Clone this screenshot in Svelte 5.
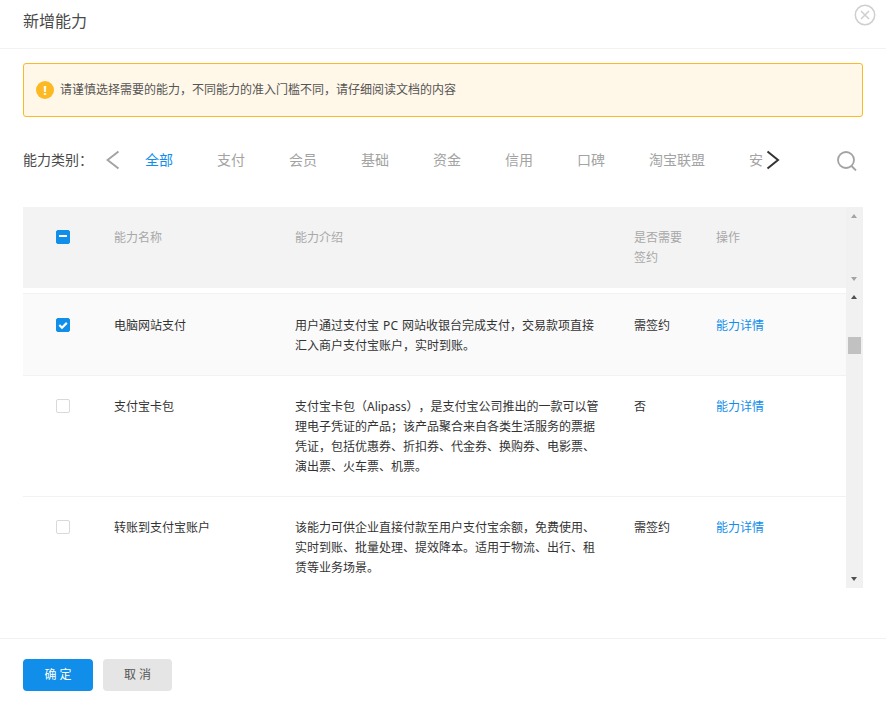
<script lang="ts">
  const tabs = ["全部", "支付", "会员", "基础", "资金", "信用", "口碑", "淘宝联盟", "安全", "其他"];

  let active = $state("全部");

  let rows = $state([
    {
      name: "电脑网站支付",
      intro: "用户通过支付宝 PC 网站收银台完成支付，交易款项直接汇入商户支付宝账户，实时到账。",
      sign: "需签约",
      checked: true,
    },
    {
      name: "支付宝卡包",
      intro: "支付宝卡包（Alipass），是支付宝公司推出的一款可以管理电子凭证的产品；该产品聚合来自各类生活服务的票据凭证，包括优惠券、折扣券、代金券、换购券、电影票、演出票、火车票、机票。",
      sign: "否",
      checked: false,
    },
    {
      name: "转账到支付宝账户",
      intro: "该能力可供企业直接付款至用户支付宝余额，免费使用、实时到账、批量处理、提效降本。适用于物流、出行、租赁等业务场景。",
      sign: "需签约",
      checked: false,
    },
  ]);
</script>

<div class="dialog">
  <header class="head">
    <h2>新增能力</h2>
    <button class="close" aria-label="关闭">
      <svg width="22" height="22" viewBox="0 0 22 22" fill="none" stroke="#cfcfcf" stroke-width="1.5">
        <circle cx="11" cy="11" r="9.7" />
        <path d="M7 7l8 8M15 7l-8 8" />
      </svg>
    </button>
  </header>

  <div class="alert">
    <span class="alert-icon">!</span>
    <span>请谨慎选择需要的能力，不同能力的准入门槛不同，请仔细阅读文档的内容</span>
  </div>

  <div class="filter">
    <span class="filter-label">能力类别：</span>
    <svg class="prev" width="14" height="20" viewBox="0 0 14 20" fill="none" stroke="#a3a3a3" stroke-width="2">
      <path d="M12.500 1.500L1.500 10l11 8.500" />
    </svg>
    <div class="tabs">
      {#each tabs as t}
        <button class="tab" class:on={t === active} onclick={() => (active = t)}>{t}</button>
      {/each}
    </div>
    <svg class="next" width="14" height="20" viewBox="0 0 14 20" fill="none" stroke="#333" stroke-width="2">
      <path d="M1.500 1.500L12 10 1.500 18.500" />
    </svg>
    <svg class="search" width="22" height="22" viewBox="0 0 22 22" fill="none" stroke="#a3a3a3" stroke-width="1.800">
      <circle cx="9" cy="11" r="8" />
      <path d="M14.500 17l4.500 4.500" />
    </svg>
  </div>

  <div class="table">
    <div class="thead-wrap">
      <div class="row thead">
        <div><span class="check on"><i class="dash"></i></span></div>
        <div>能力名称</div>
        <div>能力介绍</div>
        <div class="sign-head">是否需要签约</div>
        <div>操作</div>
      </div>
      <div class="bar">
        <i class="up light"></i>
        <i class="down light"></i>
      </div>
    </div>
    <div class="tbody-wrap">
      <div class="tbody">
        {#each rows as r, i}
          <div class="row item" class:picked={r.checked} class:first={i === 0}>
            <div>
              <button class="check" class:on={r.checked} aria-label="选择" onclick={() => (r.checked = !r.checked)}>
                {#if r.checked}
                  <svg width="14" height="14" viewBox="0 0 14 14" fill="none" stroke="#fff" stroke-width="2.200">
                    <path d="M3.300 7l2.700 2.700 4.800-4.800" />
                  </svg>
                {/if}
              </button>
            </div>
            <div>{r.name}</div>
            <div class="intro">{r.intro}</div>
            <div>{r.sign}</div>
            <div><a href="#detail" class="link">能力详情</a></div>
          </div>
        {/each}
      </div>
      <div class="bar">
        <i class="up"></i>
        <span class="thumb"></span>
        <i class="down"></i>
      </div>
    </div>
  </div>

  <footer class="foot">
    <button class="btn primary">确 定</button>
    <button class="btn">取 消</button>
  </footer>
</div>

<style>
  :global(body) {
    margin: 0;
    background: #fff;
    overflow: hidden;
  }
  .dialog {
    height: 704px;
    width: 886px;
    position: relative;
    font-family: "Noto Sans", "Noto Sans CJK SC", sans-serif;
    font-size: 12px;
    line-height: 20px;
    color: #333;
    overflow: hidden;
    text-spacing-trim: space-all;
  }
  button {
    font: inherit;
    border: 0;
    padding: 0;
    background: none;
    cursor: pointer;
  }
  .head {
    height: 48px;
    border-bottom: 1px solid #f2f2f2;
    padding-left: 23px;
    display: flex;
    align-items: center;
  }
  .head h2 {
    margin: 0;
    font-size: 16px;
    font-weight: 400;
    color: #4a4a4a;
    line-height: 42px;
    align-self: flex-start;
  }
  .close {
    position: absolute;
    left: 854px;
    top: 4px;
    width: 22px;
    height: 22px;
  }
  .alert {
    margin: 14px 23px 0;
    width: 840px;
    height: 54px;
    box-sizing: border-box;
    border: 1px solid #fcb826;
    border-radius: 3px;
    background: #fff7e8;
    display: flex;
    align-items: center;
    padding-left: 12px;
    gap: 6px;
    color: #555;
  }
  .alert-icon {
    width: 18px;
    height: 18px;
    border-radius: 50%;
    background: #fdb924;
    color: #fff;
    font-size: 13px;
    font-weight: 700;
    line-height: 18px;
    text-align: center;
  }
  .filter {
    margin: 33px 23px 0;
    height: 20px;
    display: flex;
    align-items: center;
  }
  .filter-label {
    font-size: 14px;
    flex: none;
    width: 83px;
    color: #4a4a4a;
    white-space: nowrap;
  }
  .prev {
    flex: none;
  }
  .tabs {
    flex: none;
    width: 631px;
    margin-left: 12px;
    display: flex;
    gap: 44px;
    padding-left: 13px;
    box-sizing: border-box;
    overflow: hidden;
    white-space: nowrap;
  }
  .tab {
    flex: none;
    font-size: 14px;
    color: #a3a3a3;
  }
  .tab.on {
    color: #108ee9;
  }
  .next {
    flex: none;
    margin-left: 3px;
  }
  .search {
    flex: none;
    margin-left: 57px;
  }
  .table {
    margin: 37px 0 0 23px;
    width: 840px;
  }
  .thead-wrap {
    display: flex;
    height: 81px;
  }
  .tbody-wrap {
    display: flex;
    height: 300px;
  }
  .row {
    width: 823px;
    display: grid;
    grid-template-columns: 91px 181px 339px 82px 130px;
    box-sizing: border-box;
  }
  .thead {
    background: #f3f3f3;
    color: #a8a8a8;
    padding-top: 21px;
  }
  .thead .check {
    margin-top: 2px;
  }
  .sign-head {
    width: 52px;
  }
  .tbody {
    width: 823px;
    padding-top: 5px;
    overflow: hidden;
    box-sizing: border-box;
  }
  .item {
    border-top: 1px solid #f2f2f2;
    padding: 21px 0 19px;
  }
  .item.first {
    padding-top: 22px;
  }
  .item.picked {
    background: #fafafa;
  }
  .intro {
    width: 306px;
    word-spacing: 1px;
  }
  .link {
    color: #108ee9;
    text-decoration: none;
  }
  .check {
    display: block;
    width: 14px;
    height: 14px;
    margin: 2px 0 0 33px;
    border: 1px solid #d9d9d9;
    border-radius: 2px;
    box-sizing: border-box;
    background: #fff;
    position: relative;
  }
  .check.on {
    background: #108ee9;
    border-color: #108ee9;
  }
  .check svg {
    position: absolute;
    left: -1px;
    top: -1px;
  }
  .dash {
    position: absolute;
    left: 2px;
    top: 4px;
    width: 8px;
    height: 2px;
    background: #fff;
  }
  .bar {
    width: 17px;
    background: #f1f1f1;
    position: relative;
  }
  .bar i {
    position: absolute;
    left: 5px;
    width: 0;
    height: 0;
    border-left: 3.500px solid transparent;
    border-right: 3.500px solid transparent;
  }
  .up {
    top: 7px;
    border-bottom: 4px solid #505050;
  }
  .down {
    bottom: 7px;
    border-top: 4px solid #505050;
  }
  .bar .up.light {
    border-bottom-color: #a3a3a3;
  }
  .bar .down.light {
    border-top-color: #a3a3a3;
  }
  .thumb {
    position: absolute;
    left: 2px;
    top: 49px;
    width: 13px;
    height: 17px;
    background: #c1c1c1;
  }
  .foot {
    position: absolute;
    left: 0;
    right: 0;
    top: 638px;
    border-top: 1px solid #f2f2f2;
    padding: 20px 0 0 23px;
    display: flex;
    gap: 10px;
  }
  .btn {
    width: 69px;
    height: 32px;
    border-radius: 4px;
    background: #e5e5e5;
    color: #555;
    font-size: 12px;
  }
  .btn.primary {
    width: 70px;
    background: #108ee9;
    color: #fff;
  }
</style>
